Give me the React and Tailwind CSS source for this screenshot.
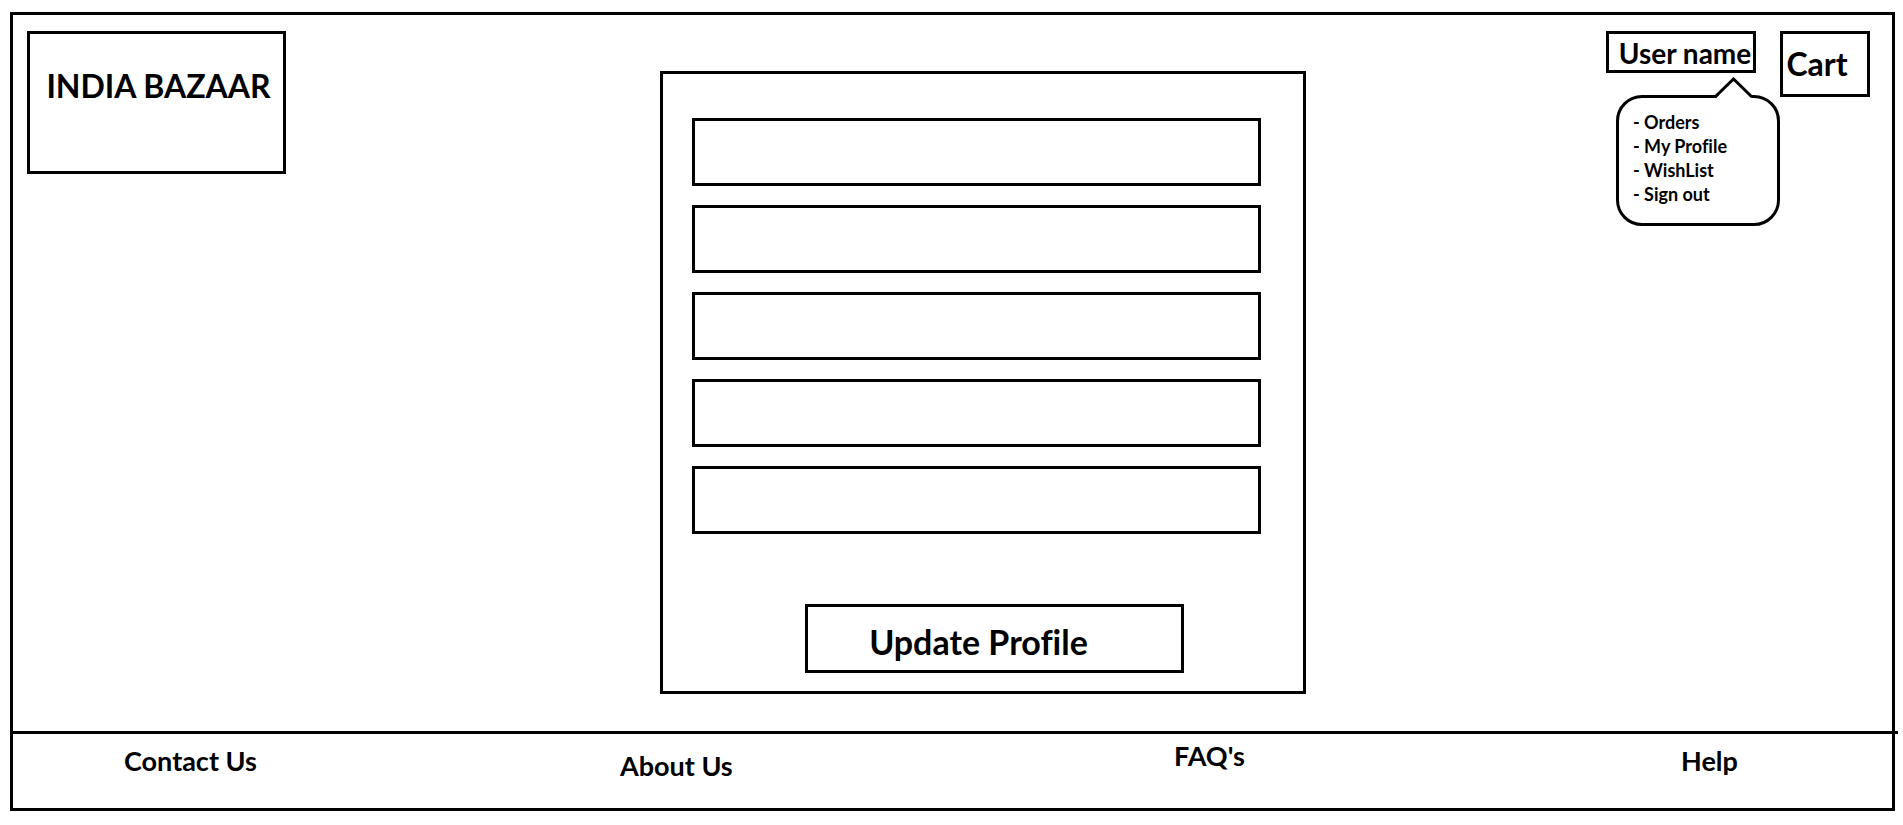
const fields = ["First name", "Last name", "Email", "Phone", "Address"];
const menuItems = ["Orders", "My Profile", "WishList", "Sign out"];

function Logo() {
  return (
    <a
      href="#home"
      className="ml-3.5 flex h-[143px] w-[259px] justify-center border-3 border-black pt-8 pl-1 text-[32px] leading-10 whitespace-nowrap"
    >
      INDIA BAZAAR
    </a>
  );
}

function ProfileForm() {
  return (
    <form className="mt-10 flex h-[623px] flex-col border-3 border-black pt-11 pr-[42px] pl-[29px]">
      <div className="flex flex-col gap-[19px]">
        {fields.map((name) => (
          <input
            key={name}
            type="text"
            aria-label={name}
            className="h-[68px] w-full border-3 border-black bg-white px-4 text-2xl outline-none"
          />
        ))}
      </div>
      <button
        type="button"
        className="mt-[70px] ml-[113px] h-[69px] w-[379px] border-3 border-black pt-1.5 pr-8 text-[34px] leading-10"
      >
        Update Profile
      </button>
    </form>
  );
}

function UserMenu() {
  return (
    <div className="relative">
      <button
        type="button"
        className="h-[42px] w-[150px] border-3 border-black pt-0.5 pl-2 text-[28px] leading-8 whitespace-nowrap"
      >
        User name
      </button>
      <div className="absolute top-16 left-2.5 h-[131px] w-[164px] rounded-[26px] border-3 border-black bg-white pt-3 pl-3.5">
        <svg
          className="absolute -top-[21px] left-[93px]"
          width="44"
          height="22"
          viewBox="0 0 44 22"
          aria-hidden="true"
        >
          <path d="M3 22 L22 3 L41 22 Z" fill="white" />
          <path d="M3 20 L21.5 2 L40 20" fill="none" stroke="black" strokeWidth="3" />
        </svg>
        <ul className="text-lg leading-6 whitespace-nowrap">
          {menuItems.map((item) => (
            <li key={item}>
              <a href="#menu">- {item}</a>
            </li>
          ))}
        </ul>
      </div>
    </div>
  );
}

function Footer() {
  return (
    <footer className="-mr-1.5 h-[77px] border-t-3 border-black pt-1.5">
      <nav className="grid h-[42px] grid-cols-[496fr_554fr_507fr_217fr] pl-[111px] text-[27px] leading-8 whitespace-nowrap">
        <a href="#contact" className="self-center">Contact Us</a>
        <a href="#about" className="self-end">About Us</a>
        <a href="#faq" className="self-start">FAQ's</a>
        <a href="#help" className="self-center">Help</a>
      </nav>
    </footer>
  );
}

export default function App() {
  return (
    <div className="flex min-h-screen flex-col bg-white pt-3 pr-2 pb-3.5 pl-2.5 font-['Lato',sans-serif] font-bold text-black [font-variant-ligatures:none]">
      <div className="flex flex-1 flex-col border-3 border-black">
        <main className="grid flex-1 grid-cols-[647fr_646px_586fr] items-start pt-4">
          <Logo />
          <ProfileForm />
          <div className="flex justify-end gap-6 pr-[22px]">
            <UserMenu />
            <button
              type="button"
              className="h-[66px] w-[90px] border-3 border-black pr-4 text-[32px] leading-10"
            >
              Cart
            </button>
          </div>
        </main>
        <Footer />
      </div>
    </div>
  );
}
